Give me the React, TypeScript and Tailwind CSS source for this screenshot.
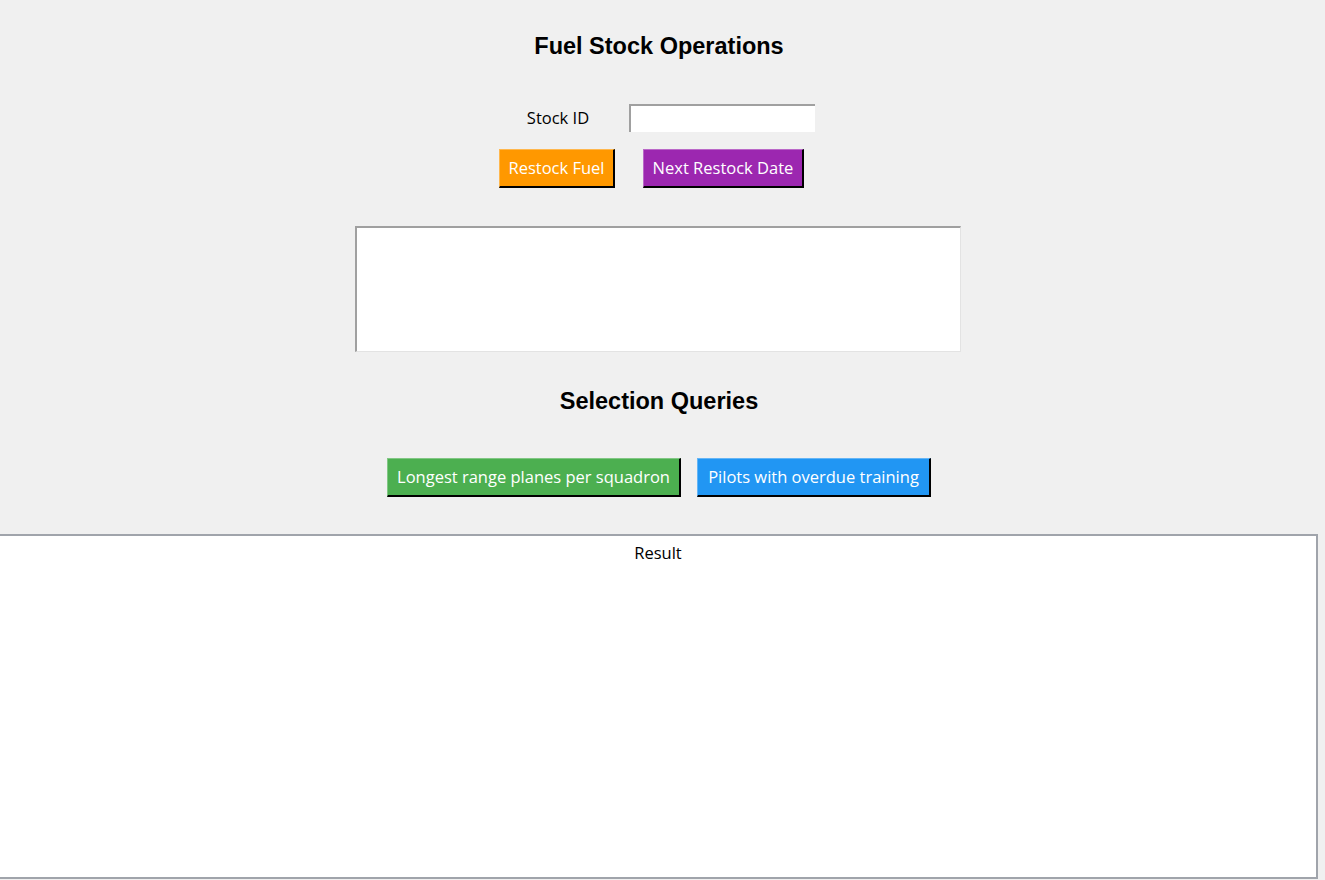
export default function App() {
  const btn =
    "h-[39px] px-[7px] text-white text-[16.5px] border-t border-l border-r-2 border-b-2 border-r-black border-b-black"

  return (
    <div
      className="w-[1325px] h-[880px] bg-[#f0f0f0] overflow-hidden"
      style={{ fontFamily: '"Open Sans", "Noto Sans", sans-serif' }}
    >
      <div className="w-[1318px] flex flex-col items-center">
        <h1
          className="mt-[32px] h-[28px] leading-[28px] text-[23.5px] font-bold text-black"
          style={{ fontFamily: '"Liberation Sans", Arial, sans-serif' }}
        >
          Fuel Stock Operations
        </h1>

        <div className="mt-[44px] flex items-center gap-[40px] pl-[24px]">
          <span className="text-[16.5px] text-black">Stock ID</span>
          <input className="w-[186px] h-[28px] bg-white border-t-2 border-l-2 border-[#a0a0a0] outline-none" />
        </div>

        <div className="mt-[17px] flex gap-[28px] pr-[15px]">
          <button className={`${btn} w-[116px] bg-[#ff9800] border-t-[#ffb74d] border-l-[#ffb74d]`}>
            Restock Fuel
          </button>
          <button className={`${btn} w-[161px] bg-[#9c27b0] border-t-[#ba68c8] border-l-[#ba68c8]`}>
            Next Restock Date
          </button>
        </div>

        <div className="mt-[38px] mr-[3px] w-[606px] h-[126px] bg-white border-t-2 border-l-2 border-r border-b border-t-[#a0a0a0] border-l-[#a0a0a0] border-r-[#e3e3e3] border-b-[#e3e3e3]" />

        <h2
          className="mt-[35px] h-[28px] leading-[28px] text-[23.5px] font-bold text-black"
          style={{ fontFamily: '"Liberation Sans", Arial, sans-serif' }}
        >
          Selection Queries
        </h2>

        <div className="mt-[43px] flex gap-[16px]">
          <button className={`${btn} w-[294px] bg-[#4caf50] border-t-[#81c784] border-l-[#81c784]`}>
            Longest range planes per squadron
          </button>
          <button className={`${btn} w-[234px] bg-[#2196f3] border-t-[#64b5f6] border-l-[#64b5f6]`}>
            Pilots with overdue training
          </button>
        </div>

        <div className="mt-[37px] w-[1318px] h-[345px] bg-white border-t-2 border-r-2 border-b-2 border-[#a0a4ab]">
          <div className="h-[34px] flex items-center justify-center text-[16.5px] text-black">Result</div>
        </div>
      </div>
    </div>
  )
}
